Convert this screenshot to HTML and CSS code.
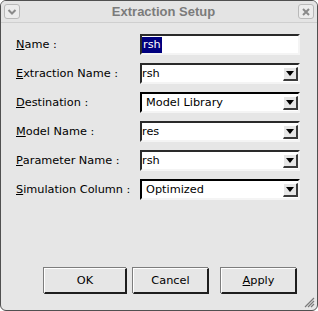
FILE: index.html
```html
<!DOCTYPE html>
<html>
<head>
<meta charset="utf-8">
<link rel="stylesheet" href="styles.css">
</head>
<body>
<div class="window">
  <div class="titlebar">
    <div class="tbtn"><svg width="10" height="8" viewBox="0 0 10 8"><path d="M1.5 2 L5 5.5 L8.5 2" fill="none" stroke="#8a8a8a" stroke-width="2"/></svg></div>
    <div class="title">Extraction Setup</div>
    <div class="tbtn"><svg width="10" height="10" viewBox="0 0 10 10"><path d="M2 2 L8 8 M8 2 L2 8" fill="none" stroke="#8a8a8a" stroke-width="2"/></svg></div>
  </div>
  <div class="form">
    <label class="lbl"><u>N</u>ame :</label>
    <div class="entry"><span class="sel">rsh</span></div>

    <label class="lbl"><u>E</u>xtraction Name :</label>
    <div class="combo editable"><span class="val">rsh</span><span class="arrow"><i></i></span></div>

    <label class="lbl"><u>D</u>estination :</label>
    <div class="combo fixed"><span class="val">Model Library</span><span class="arrow"><i></i></span></div>

    <label class="lbl"><u>M</u>odel Name :</label>
    <div class="combo editable"><span class="val">res</span><span class="arrow"><i></i></span></div>

    <label class="lbl"><u>P</u>arameter Name :</label>
    <div class="combo editable"><span class="val">rsh</span><span class="arrow"><i></i></span></div>

    <label class="lbl"><u>S</u>imulation Column :</label>
    <div class="combo fixed"><span class="val">Optimized</span><span class="arrow"><i></i></span></div>
  </div>
  <div class="buttons">
    <div class="btn ok">OK</div>
    <div class="btn cancel">Cancel</div>
    <div class="btn"><u>A</u>pply</div>
  </div>
  <div class="grip"><svg width="12" height="12" viewBox="0 0 12 12"><path d="M11 2 L2 11 M11 5 L5 11 M11 8 L8 11" stroke="#7a7a7a" stroke-width="1.2"/></svg></div>
</div>
</body>
</html>
```
FILE: styles.css
```css
html, body {
  margin: 0;
  padding: 0;
  background: #ffffff;
}
body {
  font-family: "DejaVu Sans", sans-serif;
  font-size: 11.3px;
  color: #000;
}
.window {
  position: relative;
  width: 318px;
  height: 311px;
  box-sizing: border-box;
  border: 1px solid #505050;
  border-radius: 6px;
  background: #e6e6e6;
  display: flex;
  flex-direction: column;
  overflow: hidden;
}
.titlebar {
  height: 21px;
  flex: none;
  border-bottom: 1px solid #cfcfcf;
  background: #e4e4e4;
  display: flex;
  align-items: center;
  justify-content: space-between;
  padding: 0 3px 0 3px;
}
.tbtn {
  width: 16px;
  height: 15px;
  box-sizing: border-box;
  border: 1px solid #b9b9b9;
  border-radius: 3px;
  background: #ececec;
  display: flex;
  align-items: center;
  justify-content: center;
}
.title {
  font-family: "Liberation Sans", sans-serif;
  font-weight: bold;
  font-size: 13px;
  color: #7b7b7b;
  padding-left: 9px;
}
.form {
  display: grid;
  grid-template-columns: 124px 160px;
  row-gap: 8px;
  padding: 11px 0 0 15px;
}
.lbl {
  display: flex;
  align-items: center;
  height: 21px;
  white-space: nowrap;
}
.entry, .combo {
  height: 21px;
  box-sizing: border-box;
  background: #fff;
  border-style: solid;
  border-width: 2px;
  border-color: #2a2a2a #f4f4f4 #f4f4f4 #2a2a2a;
  display: flex;
  align-items: center;
}
.sel {
  background: #00007f;
  color: #fff;
  padding: 0 1px;
  line-height: 16px;
}
.combo .val {
  flex: 1;
}
.combo.fixed {
  border-color: #000 #f4f4f4 #f4f4f4 #000;
}
.combo.fixed .val {
  padding-left: 4px;
}
.arrow {
  width: 15px;
  height: 14px;
  box-sizing: border-box;
  background: #e6e6e6;
  border-style: solid;
  border-width: 1px 2px 2px 1px;
  border-color: #ffffff #3a3a3a #3a3a3a #ffffff;
  display: flex;
  align-items: center;
  justify-content: center;
}
.arrow i {
  width: 0;
  height: 0;
  border-left: 4px solid transparent;
  border-right: 4px solid transparent;
  border-top: 5px solid #000;
}
.buttons {
  margin-top: auto;
  margin-bottom: 16px;
  display: flex;
  padding-left: 43px;
}
.btn {
  width: 76px;
  height: 26px;
  box-sizing: border-box;
  border-style: solid;
  border-width: 1px 2px 2px 1px;
  border-color: #ffffff #1e1e1e #1e1e1e #ffffff;
  box-shadow: -1px -1px 0 #7d7d7d;
  background: #e6e6e6;
  display: flex;
  align-items: center;
  justify-content: center;
}
.btn.ok {
  width: 83px;
  margin-right: 6px;
}
.btn.cancel {
  margin-right: 12px;
}
.grip {
  position: absolute;
  right: 2px;
  bottom: 2px;
  width: 12px;
  height: 12px;
}
```
